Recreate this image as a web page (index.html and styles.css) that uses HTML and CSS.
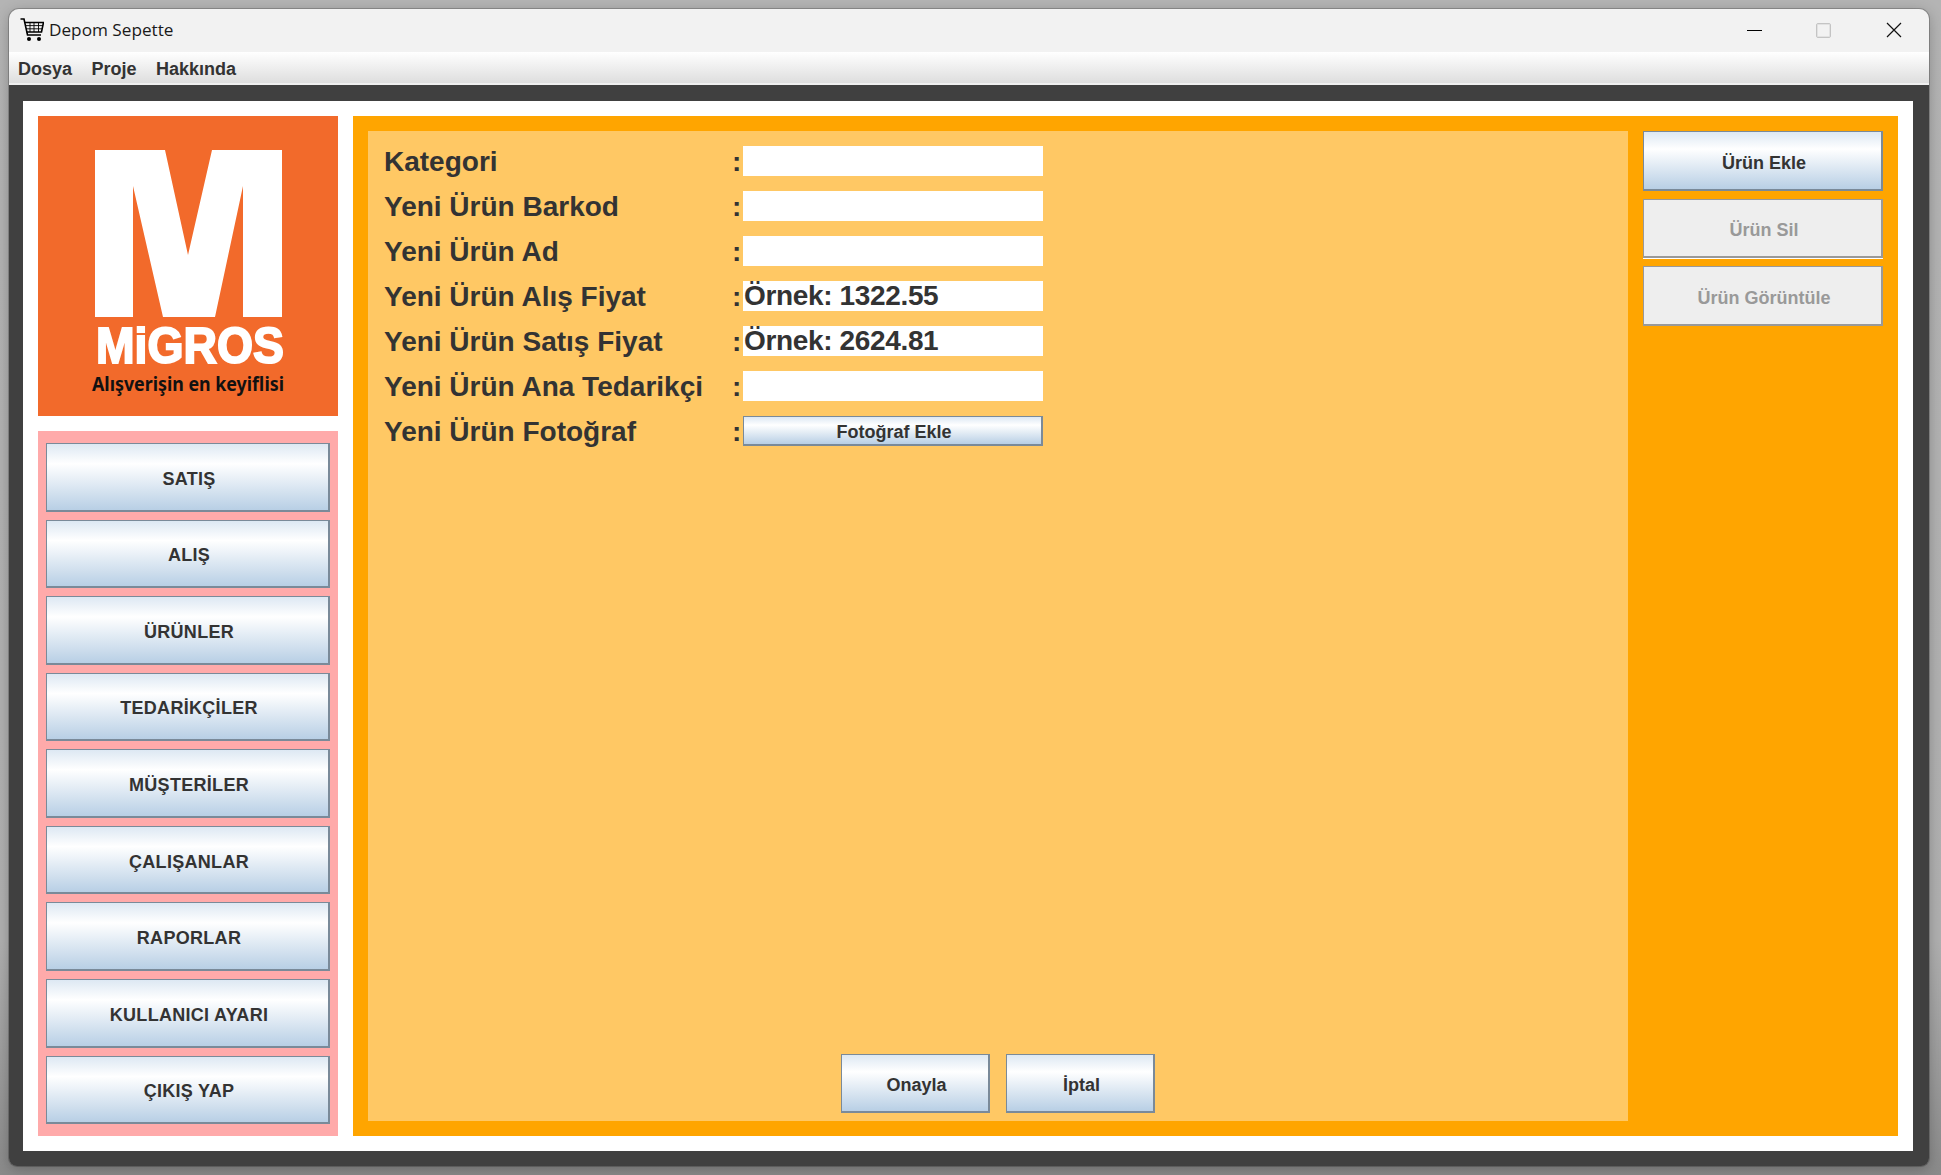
FILE: index.html

```html
<!DOCTYPE html>
<html lang="tr">
<head>
  <meta charset="UTF-8">
  <title>Depom Sepette</title>
  <link rel="stylesheet" href="styles.css">
</head>
<body>

  <div class="window">
    <div class="titlebar">
      <svg class="cart" viewBox="0 0 24 24" width="24" height="24">
        <path class="cart-line" d="M0.5 1H4L7.5 17H21"/>
        <path class="cart-line" d="M4.6 4.5H23.5L21.5 14H6.6"/>
        <path class="cart-thin" d="M5.4 7.6H23M6 10.8H22M10 4.5V14M14 4.5V14M18.5 4.5V14"/>
        <circle cx="9" cy="21" r="2"/>
        <circle cx="19" cy="21" r="2"/>
      </svg>
      <span class="app-title">Depom Sepette</span>
      <div class="controls">
        <div class="control"><span class="ctl-min"></span></div>
        <div class="control"><span class="ctl-max"></span></div>
        <div class="control">
          <svg viewBox="0 0 16 16" width="16" height="16"><path class="ctl-x" d="M1 1L15 15M15 1L1 15"/></svg>
        </div>
      </div>
    </div>

    <div class="menubar">
      <span class="menu-item">Dosya</span>
      <span class="menu-item">Proje</span>
      <span class="menu-item">Hakkında</span>
    </div>

    <div class="content">
      <div class="main">
        <div class="sidebar">
          <div class="logo">
            <svg viewBox="0 0 300 300" width="300" height="300">
              <path class="logo-m" d="M57 34H127L150 139L174 34H244V201H205V70L177 201H125L95 70V201H57Z"/>
              <text class="logo-name" x="58" y="247" textLength="188" lengthAdjust="spacingAndGlyphs">MiGROS</text>
              <text class="logo-slogan" x="54" y="275" textLength="192" lengthAdjust="spacingAndGlyphs">Alışverişin en keyiflisi</text>
            </svg>
          </div>
          <div class="nav">
            <button class="btn nav-btn">SATIŞ</button>
            <button class="btn nav-btn">ALIŞ</button>
            <button class="btn nav-btn">ÜRÜNLER</button>
            <button class="btn nav-btn">TEDARİKÇİLER</button>
            <button class="btn nav-btn">MÜŞTERİLER</button>
            <button class="btn nav-btn">ÇALIŞANLAR</button>
            <button class="btn nav-btn">RAPORLAR</button>
            <button class="btn nav-btn">KULLANICI AYARI</button>
            <button class="btn nav-btn">ÇIKIŞ YAP</button>
          </div>
        </div>

        <div class="workspace">
          <div class="form-panel">
            <div class="form">
              <label class="form-label">Kategori</label><span class="colon">:</span><input class="field" type="text">
              <label class="form-label">Yeni Ürün Barkod</label><span class="colon">:</span><input class="field" type="text">
              <label class="form-label">Yeni Ürün Ad</label><span class="colon">:</span><input class="field" type="text">
              <label class="form-label">Yeni Ürün Alış Fiyat</label><span class="colon">:</span><input class="field" type="text" value="Örnek: 1322.55">
              <label class="form-label">Yeni Ürün Satış Fiyat</label><span class="colon">:</span><input class="field" type="text" value="Örnek: 2624.81">
              <label class="form-label">Yeni Ürün Ana Tedarikçi</label><span class="colon">:</span><input class="field" type="text">
              <label class="form-label">Yeni Ürün Fotoğraf</label><span class="colon">:</span><button class="btn photo-btn">Fotoğraf Ekle</button>
            </div>
            <div class="form-actions">
              <button class="btn action-btn">Onayla</button>
              <button class="btn action-btn">İptal</button>
            </div>
          </div>

          <div class="side-actions">
            <button class="btn side-btn">Ürün Ekle</button>
            <button class="btn side-btn disabled short">Ürün Sil</button>
            <button class="btn side-btn disabled">Ürün Görüntüle</button>
          </div>
        </div>
      </div>
    </div>
  </div>

</body>
</html>
```

FILE: styles.css

```css
html, body {
  height: 100%;
}

body {
  margin: 0;
  padding: 9px 12px 9px 9px;
  box-sizing: border-box;
  height: 1175px;
  overflow: hidden;
  background: linear-gradient(to bottom, #b4b4b4, #b0b0b0 80%, #8a8a8a);
  font-family: "Liberation Sans", Arial, sans-serif;
  color: #333;
}

.window {
  height: 1157px;
  display: flex;
  flex-direction: column;
  border-radius: 10px 10px 8px 8px;
  overflow: hidden;
  box-shadow: 0 0 0 1px rgba(0, 0, 0, 0.2), 0 3px 14px rgba(0, 0, 0, 0.25);
}

.titlebar {
  height: 43px;
  flex-shrink: 0;
  display: flex;
  align-items: center;
  padding-left: 11px;
  background-color: #f2f2f2;
}

.cart {
  margin-right: 5px;
  margin-bottom: 1px;
}

.cart-line {
  fill: none;
  stroke: #000;
  stroke-width: 1.6;
}

.cart-thin {
  fill: none;
  stroke: #000;
  stroke-width: 0.9;
}

.app-title {
  font-family: "Open Sans", sans-serif;
  font-size: 17.2px;
  color: #1a1a1a;
  margin-bottom: 2px;
}

.controls {
  margin-left: auto;
  display: flex;
}

.control {
  width: 70px;
  height: 43px;
  display: flex;
  align-items: center;
  justify-content: center;
}

.ctl-min {
  width: 15px;
  height: 1px;
  margin-bottom: 1px;
  background-color: #000;
}

.ctl-max {
  width: 13px;
  height: 13px;
  margin: 0 2px 1px 0;
  border: 1px solid #c4c4c4;
  box-shadow: inset 0 0 0 1px #e2e2e2;
  border-radius: 2px;
}

.control svg {
  margin-bottom: 1px;
}

.ctl-x {
  fill: none;
  stroke: #111;
  stroke-width: 1.2;
}

.menubar {
  height: 31px;
  flex-shrink: 0;
  display: flex;
  align-items: center;
  gap: 19.5px;
  padding-left: 9px;
  background: linear-gradient(to bottom, #fff, #dedede);
  border-bottom: 2px solid #f0f0f0;
  box-sizing: content-box;
}

.menu-item {
  font-size: 18px;
  font-weight: bold;
  padding-top: 3px;
}

.content {
  flex: 1;
  min-height: 0;
  padding: 16px 16px 15px 14px;
  background-color: #404040;
}

.main {
  height: 100%;
  box-sizing: border-box;
  padding: 15px;
  display: flex;
  gap: 15px;
  background-color: #fff;
}

.sidebar {
  width: 300px;
  flex-shrink: 0;
  display: flex;
  flex-direction: column;
  gap: 15px;
}

.logo {
  height: 300px;
  flex-shrink: 0;
  background-color: #f26a2b;
}

.logo svg {
  display: block;
}

.logo-m {
  fill: #fff;
}

.logo-name {
  font-size: 50px;
  font-weight: bold;
  fill: #fff;
  stroke: #fff;
  stroke-width: 2;
}

.logo-slogan {
  font-family: "Noto Sans", sans-serif;
  font-size: 20px;
  font-weight: bold;
  fill: #111;
}

.btn {
  font-family: "Liberation Sans", Arial, sans-serif;
  font-size: 18px;
  font-weight: bold;
  color: #333;
  padding: 5px 0 0 3px;
  border-style: solid;
  border-color: #7a8a99;
  border-width: 1px 2px 2px 1px;
  background: linear-gradient(to bottom, #dde8f3, #fff 30%, #b8cfe5);
  cursor: pointer;
}

.nav {
  flex: 1;
  display: flex;
  flex-direction: column;
  gap: 8px;
  padding: 12px 8px 12px 8px;
  background-color: #ffaaaa;
}

.nav-btn {
  flex: 1;
  letter-spacing: 0.3px;
}

.workspace {
  flex: 1;
  display: flex;
  gap: 15px;
  padding: 15px;
  background-color: #ffa500;
}

.form-panel {
  flex: 1;
  display: flex;
  flex-direction: column;
  padding: 15px 16px 8px;
  background-color: #ffc864;
}

.form {
  display: grid;
  grid-template-columns: 348px 11px 300px;
  grid-auto-rows: 30px;
  row-gap: 15px;
  align-items: center;
}

.form-label,
.colon {
  font-size: 28px;
  font-weight: bold;
  padding-top: 1px;
}

.field {
  height: 30px;
  box-sizing: border-box;
  padding: 0 1px;
  border: none;
  font-family: "Liberation Sans", Arial, sans-serif;
  font-size: 28px;
  font-weight: bold;
  letter-spacing: -0.35px;
  color: #333;
  background-color: #fff;
}

.photo-btn {
  height: 30px;
  padding-top: 3px;
}

.form-actions {
  margin-top: auto;
  display: flex;
  justify-content: center;
  gap: 16px;
}

.action-btn {
  width: 149px;
  height: 59px;
  padding-top: 4px;
}

.side-actions {
  width: 240px;
  flex-shrink: 0;
  display: flex;
  flex-direction: column;
  gap: 8px;
}

.side-btn {
  height: 60px;
}

.disabled {
  color: #999;
  border-color: #999;
  background: #eee;
  cursor: default;
}

.short {
  height: 59px;
  box-shadow: 0 1px #fff;
}
```
